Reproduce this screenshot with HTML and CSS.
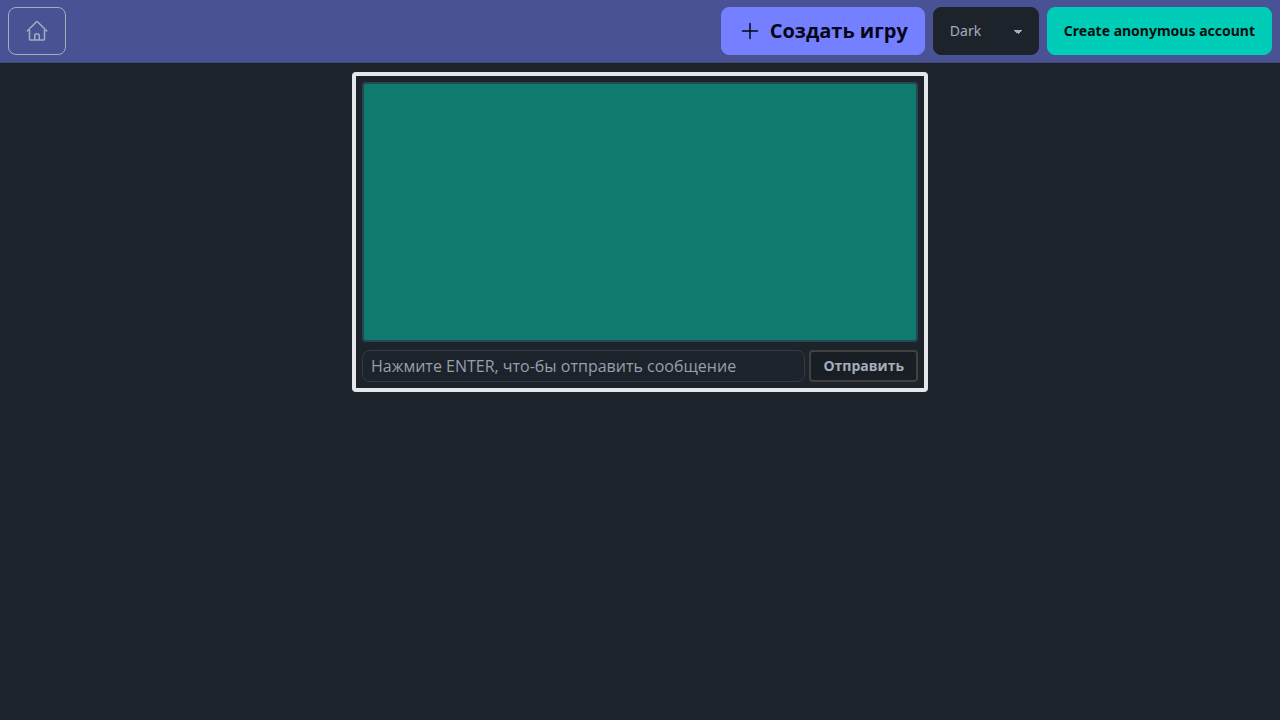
FILE: index.html
```html
<!DOCTYPE html>
<html lang="ru">
<head>
<meta charset="utf-8">
<meta name="viewport" content="width=device-width, initial-scale=1">
<title>Создать игру</title>
<link rel="stylesheet" href="styles.css">
</head>
<body>
<header class="navbar">
  <a class="btn btn-home" href="#" aria-label="Home">
    <svg class="icon" viewBox="0 0 24 24" aria-hidden="true"><path d="m2.25 12 8.954-8.955c.44-.439 1.152-.439 1.591 0L21.75 12M4.5 9.75v10.125c0 .621.504 1.125 1.125 1.125H9.75v-4.875c0-.621.504-1.125 1.125-1.125h2.25c.621 0 1.125.504 1.125 1.125V21h4.125c.621 0 1.125-.504 1.125-1.125V9.75M8.25 21h8.25"/></svg>
  </a>
  <div class="actions">
    <button class="btn btn-primary" type="button">
      <svg class="icon" viewBox="0 0 24 24" aria-hidden="true"><path d="M12 4.5v15m7.5-7.5h-15"/></svg>
      Создать игру
    </button>
    <select class="select" aria-label="Theme">
      <option>Dark</option>
      <option>Light</option>
    </select>
    <button class="btn btn-accent" type="button">Create anonymous account</button>
  </div>
</header>
<main class="page">
  <section class="chat">
    <div class="messages" role="log"></div>
    <form class="composer">
      <input class="message" type="text" aria-label="Сообщение" placeholder="Нажмите ENTER, что-бы отправить сообщение">
      <button class="send" type="button">Отправить</button>
    </form>
  </section>
</main>
</body>
</html>
```
FILE: styles.css
```css
* {
  box-sizing: border-box;
}

body {
  margin: 0;
  background: #1d232a;
  color: #a6adbb;
  font-family: "Open Sans", "Noto Sans", sans-serif;
  font-size: 16px;
  line-height: 24px;
}

button,
input,
select {
  margin: 0;
  font-family: inherit;
}

.navbar {
  display: flex;
  align-items: center;
  justify-content: space-between;
  padding: 7px 8px;
  background: #495295;
  border-bottom: 1px solid #414976;
}

.actions {
  display: flex;
  gap: 8px;
}

.btn {
  display: inline-flex;
  align-items: center;
  justify-content: center;
  gap: 8px;
  height: 48px;
  padding: 0 16px;
  border: 1px solid transparent;
  border-radius: 8px;
  font-size: 14px;
  font-weight: 700;
  line-height: 14px;
  text-decoration: none;
  cursor: pointer;
}

.btn-home {
  color: #a6adbb;
  border-color: #a6adbb;
}

.btn-primary {
  background: #7480ff;
  border-color: #7480ff;
  color: #050617;
  font-size: 20px;
  line-height: 28px;
}

.btn-accent {
  background: #00cdb8;
  border-color: #00cdb8;
  color: #000f0c;
  font-family: "Noto Sans", sans-serif;
}

.icon {
  width: 24px;
  height: 24px;
  fill: none;
  stroke: currentColor;
  stroke-width: 1.5;
  stroke-linecap: round;
  stroke-linejoin: round;
}

.select {
  width: 106px;
  height: 48px;
  padding: 0 40px 0 16px;
  appearance: none;
  border: 1px solid #1d232a;
  border-radius: 8px;
  background-color: #1d232a;
  background-image:
    linear-gradient(45deg, transparent 50%, currentColor 50%),
    linear-gradient(135deg, currentColor 50%, transparent 50%);
  background-position:
    calc(100% - 20px) calc(50% + 1px),
    calc(100% - 16px) calc(50% + 1px);
  background-size: 4px 4px;
  background-repeat: no-repeat;
  color: #a6adbb;
  font-family: "Noto Sans", sans-serif;
  font-size: 14px;
  line-height: 28px;
}

.page {
  padding: 9px 8px;
}

.chat {
  display: flex;
  flex-direction: column;
  gap: 8px;
  max-width: 576px;
  margin: 0 auto;
  padding: 6px;
  border: 4px solid #e5e7eb;
  border-radius: 4px;
}

.messages {
  height: 260px;
  border: 2px solid #21494f;
  border-radius: 4px;
  background: #107970;
  overflow-y: auto;
}

.composer {
  display: flex;
  gap: 4px;
}

.message {
  flex: 1;
  min-width: 0;
  height: 32px;
  padding: 0 8px;
  border: 1px solid #343b44;
  border-radius: 8px;
  background: #1d232a;
  color: #a6adbb;
  font-size: 16px;
}

.message::placeholder {
  color: #989fac;
  opacity: 1;
}

.send {
  height: 32px;
  padding: 0 12px;
  border: 2px solid #414141;
  border-radius: 4px;
  background: #191e24;
  color: #a6adbb;
  font-size: 14px;
  font-weight: 700;
  line-height: 20px;
  cursor: pointer;
}
```
